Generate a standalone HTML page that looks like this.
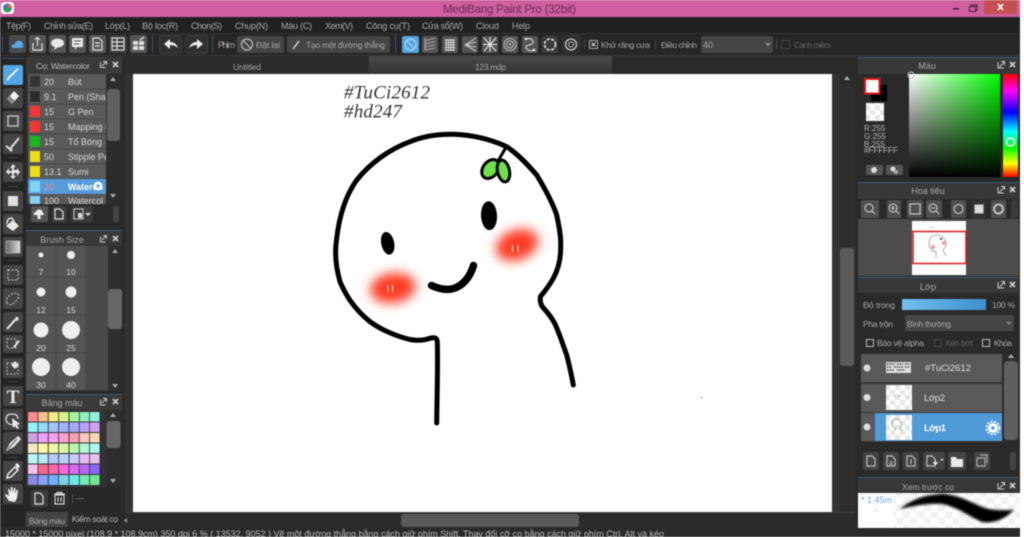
<!DOCTYPE html>
<html><head><meta charset="utf-8"><title>MediBang Paint Pro</title>
<style>
html,body{margin:0;padding:0;background:#fff;width:1024px;height:537px;overflow:hidden}
svg{display:block;filter:blur(.45px)}
text{font-family:"Liberation Sans","Noto Sans CJK JP",sans-serif;font-size:9px;fill:#a8a8a8}
.c{text-anchor:middle}
.l{fill:#d8d8d8}
.b{fill:#555}
.d{fill:#3c3c3c}
.i{fill:#ddd}
.s{fill:none;stroke:#ddd;stroke-width:1.2}
.k{fill:none;stroke:#000;stroke-linecap:round;stroke-linejoin:round}
</style></head><body>
<svg width="1024" height="537" viewBox="0 0 1024 537" xmlns="http://www.w3.org/2000/svg">
<defs>
<pattern id="ch" width="10" height="10" patternUnits="userSpaceOnUse"><rect width="10" height="10" fill="#fff"/><rect width="5" height="5" fill="#e6e6e6"/><rect x="5" y="5" width="5" height="5" fill="#e6e6e6"/></pattern>
<pattern id="ch2" width="14" height="14" patternUnits="userSpaceOnUse"><rect width="14" height="14" fill="#fff"/><rect width="7" height="7" fill="#f2f2f2"/><rect x="7" y="7" width="7" height="7" fill="#f2f2f2"/></pattern>
<linearGradient id="sv1"><stop offset="0" stop-color="#fff"/><stop offset="1" stop-color="#00ff00"/></linearGradient>
<linearGradient id="sv2" x2="0" y2="1"><stop offset="0" stop-color="#000" stop-opacity="0"/><stop offset="1" stop-color="#000"/></linearGradient>
<linearGradient id="hue" x2="0" y2="1"><stop offset="0" stop-color="#f00"/><stop offset=".167" stop-color="#f0f"/><stop offset=".37" stop-color="#00f"/><stop offset=".56" stop-color="#0ff"/><stop offset=".72" stop-color="#0f0"/><stop offset=".87" stop-color="#ff0"/><stop offset="1" stop-color="#f00"/></linearGradient>
<linearGradient id="op"><stop offset="0" stop-color="#72bef0"/><stop offset="1" stop-color="#3f8fcb"/></linearGradient>
<linearGradient id="gr"><stop offset="0" stop-color="#666"/><stop offset="1" stop-color="#ddd"/></linearGradient>
<linearGradient id="tab" x2="0" y2="1"><stop offset="0" stop-color="#4a4a4a"/><stop offset="1" stop-color="#333"/></linearGradient>
<filter id="bl" x="-60%" y="-60%" width="220%" height="220%"><feGaussianBlur stdDeviation="5.5"/></filter>
<filter id="bs" x="-10%" y="-50%" width="120%" height="200%"><feGaussianBlur stdDeviation="1.2"/></filter>
</defs>

<!-- base -->
<rect width="1024" height="537" fill="#2a2a2a"/>
<rect x="1020" width="4" height="537" fill="#fff"/>

<!-- title bar -->
<rect width="1020" height="17" fill="#cf5f9e"/>
<rect x="1" y="2" width="13" height="12" rx="3" fill="#fff"/>
<circle cx="7.5" cy="8" r="4.5" fill="#2c9b6a"/><path d="M7.5 3.5a4.5 4.5 0 0 1 4.5 4.5H7.5z" fill="#e8663c"/><path d="M3 8a4.5 4.5 0 0 1 4.5-4.5V8z" fill="#3a78c8"/>
<text x="443" y="13" textLength="133" style="font-size:11.5px;fill:#6a2a58">MediBang Paint Pro (32bit)</text>
<rect x="953" y="8" width="6" height="1.6" fill="#40233a"/>
<rect x="971" y="5" width="6" height="5" fill="none" stroke="#40233a"/><rect x="969.500" y="6.500" width="6" height="5" fill="#cf5f9e" stroke="#40233a"/>
<rect x="984" y="0" width="33" height="14" fill="#c4504f"/>
<path d="M998 4l5 6M1003 4l-5 6" stroke="#fff" stroke-width="1.6"/>

<!-- menu -->
<rect y="17" width="1020" height="16" fill="#212121"/>
<text x="6" y="29" textLength="25">Tệp(F)</text>
<text x="44" y="29" textLength="49">Chỉnh sửa(E)</text>
<text x="105" y="29" textLength="25">Lớp(L)</text>
<text x="142" y="29" textLength="36">Bộ lọc(R)</text>
<text x="191" y="29" textLength="31">Chọn(S)</text>
<text x="235" y="29" textLength="33">Chụp(N)</text>
<text x="281" y="29" textLength="31">Màu (C)</text>
<text x="325" y="29" textLength="28">Xem(V)</text>
<text x="366" y="29" textLength="44">Công cụ(T)</text>
<text x="422" y="29" textLength="41">Cửa sổ(W)</text>
<text x="476" y="29" textLength="23">Cloud</text>
<text x="512" y="29" textLength="18">Help</text>

<!-- toolbar -->
<rect y="33" width="1020" height="22" fill="#262626"/>
<rect y="33" width="1020" height="1" fill="#333"/>
<rect x="2" y="36" width="1" height="16" fill="#3b5068"/>
<rect x="152" y="35" width="1" height="18" fill="#3b5068"/>
<rect x="212" y="35" width="1" height="18" fill="#3b5068"/>
<rect x="395" y="35" width="1" height="18" fill="#3b5068"/>
<rect x="9" y="35" width="17" height="18" rx="2" fill="#4a4a4a"/>
<path d="M12 48q-1-4 3-4 1-4 5-3 3 0 3 4 1 3-2 3z" fill="#5ca8e6"/>
<rect x="29" y="35" width="17" height="18" rx="2" class="b"/>
<path d="M33 43v7h9v-7M37.500 46v-8M35 40l2.500-2.500 2.500 2.500" class="s"/>
<rect x="49" y="35" width="17" height="18" rx="2" class="b"/>
<ellipse cx="57.500" cy="43" rx="6.500" ry="4.500" fill="#e8e8e8"/><path d="M55 46l-1 4 4-3z" fill="#e8e8e8"/>
<rect x="69" y="35" width="17" height="18" rx="2" class="b"/>
<path d="M72 38h11v9h-6l-2 3v-3h-3z" fill="#e8e8e8"/><path d="M74 41h7M74 44h5" stroke="#555"/>
<rect x="89" y="35" width="17" height="18" rx="2" class="b"/>
<path d="M93 38h6l3 3v9h-9zM95 43h5M95 46h5" class="s"/>
<rect x="109" y="35" width="18" height="18" rx="2" class="d"/>
<path d="M112 38h12v12h-12zM112 42h12M112 46h12M117 38v12" class="s"/>
<rect x="130" y="35" width="17" height="18" rx="2" class="b"/>
<path d="M133 41h5v4h-5zM139 41h5v4h-5zM133 46h5v4h-5zM139 46h5v4h-5z" fill="#ddd"/><path d="M140 40l4-3" stroke="#ddd" stroke-width="1.500"/>
<rect x="159.500" y="35.500" width="22" height="18" rx="2" fill="#303030" stroke="#3e3e3e"/>
<path d="M164 44l6-5v3q6 0 8 6-3-3-8-3v4z" fill="#eee"/>
<rect x="185.500" y="35.500" width="22" height="18" rx="2" fill="#303030" stroke="#3e3e3e"/>
<path d="M203 44l-6-5v3q-6 0-8 6 3-3 8-3v4z" fill="#eee"/>
<text x="218" y="48" textLength="17">Phím</text>
<rect x="237" y="36" width="47" height="17" rx="2" style="fill:#454545"/>
<circle cx="247" cy="44.500" r="5.500" fill="none" stroke="#bbb" stroke-width="1.200"/><path d="M243 40.500l8 8" stroke="#bbb" stroke-width="1.200"/>
<text x="256" y="48" textLength="24" style="font-size:8.500px">Đặt lại</text>
<rect x="287" y="36" width="103" height="17" rx="2" style="fill:#454545"/>
<path d="M293 49l6-8" stroke="#ccc" stroke-width="1.500"/>
<text x="306" y="48" textLength="79" style="font-size:8.500px">Tạo một đường thẳng</text>

<!-- snap icons -->
<rect x="402" y="36" width="17" height="17" rx="2" fill="#55a5e2"/>
<circle cx="410.500" cy="44.500" r="5.500" fill="none" stroke="#a8d4f4" stroke-width="1.200"/><path d="M406.500 40.500l8 8" stroke="#a8d4f4" stroke-width="1.200"/>
<rect x="422" y="36" width="16" height="17" rx="2" class="b"/>
<path d="M425 41l10-3M425 44l10-2.500M425 47l10-2M425 50l10-2M425 38v12" stroke="#aaa"/>
<rect x="442" y="36" width="16" height="17" rx="2" class="b"/>
<path d="M445 40h10M445 42.500h10M445 45h10M445 47.500h10M445 50h10M446 39v12M448.500 39v12M451 39v12M453.500 39v12" stroke="#ddd" stroke-width=".9"/>
<rect x="462" y="36" width="16" height="17" rx="2" class="b"/>
<path d="M476 38l-11 7 11 6M476 42l-11 3 11 2" stroke="#ccc" fill="none"/>
<rect x="482" y="36" width="16" height="17" rx="2" class="b"/>
<path d="M484 38l12 13M496 38l-12 13M490 37v15M483 44.500h14" stroke="#eee"/>
<rect x="502" y="36" width="16" height="17" rx="2" class="b"/>
<circle cx="510" cy="44.500" r="6" fill="none" stroke="#bbb"/><circle cx="510" cy="44.500" r="3.500" fill="none" stroke="#bbb"/><circle cx="510" cy="44.500" r="1.200" fill="#bbb"/>
<rect x="522" y="36" width="16" height="17" rx="2" class="b"/>
<path d="M526 39q6-1 7 2t-4 4-2 4 7 1" fill="none" stroke="#ccc" stroke-width="1.200"/><circle cx="526" cy="39" r="1.300" fill="#eee"/><circle cx="534" cy="50" r="1.300" fill="#eee"/>
<rect x="542" y="36" width="16" height="17" rx="2" class="d"/>
<circle cx="550" cy="44.500" r="5.500" fill="none" stroke="#eee" stroke-width="1.500" stroke-dasharray="3 1.500"/>
<rect x="563" y="36" width="16" height="17" rx="2" fill="#2a2a2a" stroke="#3e3e3e"/>
<circle cx="571" cy="44.500" r="5.500" fill="none" stroke="#ccc" stroke-width="1.300"/><circle cx="571" cy="44.500" r="2.500" fill="none" stroke="#ccc"/>
<rect x="584" y="40" width="1" height="9" fill="#444"/>
<rect x="589.500" y="40.500" width="8" height="8" fill="none" stroke="#aaa"/><path d="M591.500 42.500l4 4M595.500 42.500l-4 4" stroke="#ddd"/>
<text x="601" y="48" textLength="49" style="font-size:8.500px">Khử răng cưa</text>
<rect x="655" y="40" width="1" height="9" fill="#444"/>
<text x="661" y="48" textLength="36" style="font-size:8.500px">Điều chỉnh</text>
<rect x="701" y="36" width="72" height="17" rx="2" fill="#454545"/>
<text x="703" y="48">40</text>
<path d="M765 43h6l-3 3z" fill="#999"/>
<rect x="776" y="40" width="1" height="9" fill="#555"/>
<rect x="781.500" y="40.500" width="8" height="8" fill="none" stroke="#444"/>
<text x="794" y="48" textLength="37" style="font-size:8.500px;fill:#666">Cạnh mềm</text>

<!-- tabs -->
<rect y="55" width="1020" height="19" fill="#2a2a2a"/>
<rect y="55" width="1020" height="1" fill="#383838"/>
<rect x="125" y="56" width="244" height="18" fill="#2c2c2c"/>
<text x="233" y="70" textLength="28" style="font-size:8.500px">Untitled</text>
<rect x="369" y="56" width="243" height="18" fill="url(#tab)"/>
<text x="475" y="70" textLength="31" style="font-size:8.500px">123.mdp</text>

<!-- canvas -->
<rect x="133" y="74" width="699" height="438" fill="#fff"/>
<rect x="125" y="74" width="8" height="438" fill="#333"/>
<text x="344" y="98.500" textLength="86" style="font-family:'Liberation Serif',serif;font-style:italic;font-size:19px;fill:#333">#TuCi2612</text>
<text x="344" y="117.500" textLength="58" style="font-family:'Liberation Serif',serif;font-style:italic;font-size:19px;fill:#333">#hd247</text>
<ellipse cx="393" cy="288" rx="23" ry="15" transform="rotate(-8 393 288)" fill="#ff3a20" filter="url(#bl)"/>
<ellipse cx="517" cy="245" rx="22" ry="15" transform="rotate(-20 517 245)" fill="#ff3a20" filter="url(#bl)"/>
<path d="M388 285v7M392.500 285v7M512.500 245v7M518 245v7" stroke="#ffdcd0" stroke-width="1.100"/>
<path class="k" stroke-width="5" d="M436.700 423C437 395 438 365 437.300 342 437 337 434 337.500 431 338 424 340.500 418 341 410 339.500 395 336 380 329 370 321.700 352 307 345 293 340 281.700 335 264 335 250 336.500 240 339 217 345 197 356 181 370 163 390 149 410 141.700 424 136 440 134 453.300 134.300 474 135 492 140 506.700 146.700 518 154 528 165 536.700 175 547 192 553 204 556.700 215 559 226 561 236 560.700 245 561 260 558 270 553.300 278.300 549 286 545 291 540.500 296.500 539.500 302 541 305 543 307.500 549 314 552 318 555 324 560 335 563 345 566.700 355 569 364 571.500 375 573.300 385"/>
<ellipse cx="387.700" cy="243.300" rx="6.500" ry="11.500" transform="rotate(-12 387.700 243.300)"/>
<ellipse cx="489" cy="215.700" rx="8" ry="14.500" transform="rotate(-3 489 215.700)"/>
<path class="k" stroke-width="7.500" d="M431.500 285.500Q448 293 459 286 469 280 473.500 265.500"/>
<path class="k" stroke-width="3" d="M506.500 146.500L498 161"/>
<ellipse cx="490.500" cy="169" rx="7.500" ry="10.500" transform="rotate(38 490.500 169)" fill="#6ee04a" stroke="#000" stroke-width="3"/>
<ellipse cx="503.500" cy="171" rx="6" ry="11" transform="rotate(-12 503.500 171)" fill="#6ee04a" stroke="#000" stroke-width="3"/>
<rect x="701" y="397" width="1" height="1" fill="#222"/>

<!-- canvas scrollbars -->
<rect x="832" y="74" width="23" height="438" fill="#333"/>
<rect x="840" y="74" width="14" height="438" fill="#2e2e2e"/>
<rect x="840" y="74" width="14" height="9" fill="#2a2a2a"/>
<path d="M844 80h6l-3-4z" fill="#aaa"/>
<rect x="840" y="248" width="14" height="118" rx="3" fill="#5a5a5a"/>
<rect x="125" y="512" width="730" height="15" fill="#2b2b2b"/>
<rect x="125" y="512" width="730" height="1" fill="#444"/>
<path d="M127 518v5l-3-2.500z" fill="#999"/>
<rect x="401" y="514" width="178" height="13" rx="3" fill="#5a5a5a"/>

<!-- status bar -->
<rect y="527" width="1020" height="10" fill="#2a2a2a"/>
<text x="5" y="537" textLength="659" style="font-size:9px;fill:#bbb">15000 * 15000 pixel   (108.9 * 108.9cm)   350 dpi   6 %   ( 13532, 9052 )   Vẽ một đường thẳng bằng cách giữ phím Shift. Thay đổi cỡ cọ bằng cách giữ phím Ctrl, Alt và kéo</text>

<!-- left tools -->
<rect y="56" width="25" height="471" fill="#242424"/>
<rect x="2" y="58" width="22" height="1" fill="#3b5068"/>
<rect x="3" y="65" width="20" height="20" rx="2" fill="#55a5e2"/>
<path d="M7 81q2-1 3-3l9-9-1.500-1-9 8.500q-2 2-1.500 4.500z" fill="#e8f4ff"/>
<rect x="3" y="88" width="20" height="20" rx="2" style="fill:#454545"/>
<path d="M7 99l7-8 5 5-7 8z" fill="#f0f0f0"/><path d="M7 99l3-3 5 5-3 3z" fill="#888"/>
<rect x="3" y="111" width="20" height="20" rx="2" style="fill:#454545"/>
<rect x="8" y="116" width="10" height="10" fill="none" stroke="#bbb" stroke-width="1.500"/>
<rect x="3" y="134" width="20" height="20" rx="2" style="fill:#454545"/>
<path d="M6 146l4 3 9-11" fill="none" stroke="#ddd" stroke-width="2"/><circle cx="11" cy="150" r="1.500" fill="#ddd"/>
<rect x="8" y="157" width="10" height="1" fill="#444"/>
<rect x="3" y="162" width="20" height="20" rx="2" style="fill:#454545"/>
<path d="M13 164l3 3h-2v3h3v-2l3 4-3 4v-3h-3v3h2l-3 3-3-3h2v-3H9v2l-3-3 3-4v3h3v-3h-2z" fill="#e4e4e4"/>
<rect x="8" y="186" width="10" height="1" fill="#444"/>
<rect x="3" y="191" width="20" height="20" rx="2" style="fill:#454545"/>
<rect x="8" y="196" width="10" height="10" fill="#e0e0e0"/>
<rect x="3" y="214" width="20" height="20" rx="2" style="fill:#454545"/>
<path d="M6 226l7-6 6 6-6 5z" fill="#e8e8e8"/><path d="M7 224q0-6 5-6l2 3" fill="none" stroke="#ddd" stroke-width="1.400"/>
<rect x="3" y="237" width="20" height="20" rx="2" style="fill:#454545"/>
<rect x="6" y="241" width="14" height="12" fill="url(#gr)" stroke="#ccc" stroke-width=".6"/>
<rect x="8" y="260" width="10" height="1" fill="#444"/>
<rect x="3" y="265" width="20" height="20" rx="2" style="fill:#454545"/>
<rect x="8" y="270" width="10" height="10" fill="none" stroke="#ccc" stroke-dasharray="2 1.500"/>
<rect x="3" y="288" width="20" height="21" rx="2" style="fill:#454545"/>
<path d="M7 303q-2-5 3-8t8-1q2 3-3 8t-8 1z" fill="none" stroke="#ccc" stroke-dasharray="2 1.500"/>
<rect x="3" y="312" width="20" height="20" rx="2" style="fill:#454545"/>
<path d="M7 329l8-9" stroke="#eee" stroke-width="2"/><path d="M16 316l1 1.500 2-.5-1 2 1 1.500-2-.2-1 1.500-.5-2-1.800-.6 1.800-1z" fill="#eee"/>
<rect x="3" y="335" width="20" height="18" rx="2" style="fill:#454545"/>
<rect x="7" y="339" width="9" height="9" fill="none" stroke="#bbb" stroke-dasharray="2 1.500"/><path d="M13 347l5-7 2 1-5 7z" fill="#ddd"/>
<rect x="3" y="358" width="20" height="20" rx="2" style="fill:#454545"/>
<rect x="7" y="363" width="11" height="11" fill="none" stroke="#bbb" stroke-dasharray="2 1.500"/><path d="M11 365l4-4 4 4-4 4z" fill="#e4e4e4"/>
<rect x="8" y="381" width="10" height="1" fill="#444"/>
<rect x="3" y="386" width="20" height="20" rx="2" style="fill:#454545"/>
<text x="13" y="403" class="c" style="font-family:'Liberation Serif',serif;font-weight:bold;font-size:19px;fill:#e8e8e8">T</text>
<rect x="3" y="409" width="20" height="21" rx="2" style="fill:#454545"/>
<path d="M13 425q-7-1-7-6t6-5 6 5" fill="none" stroke="#ddd" stroke-width="1.200"/><path d="M12 418l8 6-3 1 2 3-2 1-2-3-2 2z" fill="#e8e8e8"/>
<rect x="3" y="432" width="20" height="22" rx="2" style="fill:#454545"/>
<path d="M6 451l4-8 8-7 3 3-7 8z" fill="#e8e8e8"/><path d="M8 449l9-10" stroke="#555"/>
<rect x="8" y="457" width="10" height="1" fill="#444"/>
<rect x="3" y="461" width="20" height="20" rx="2" style="fill:#454545"/>
<path d="M7 478l1-4 7-7 3 3-7 7z" fill="none" stroke="#eee" stroke-width="1.500"/><path d="M15 465l2-2 3 3-2 3z" fill="#eee"/>
<rect x="3" y="484" width="20" height="20" rx="2" style="fill:#454545"/>
<path d="M9 501l-4-6 1-1 3 2-1-7h1.500l1 4 .5-6h1.500l.5 6 1-5h1.500l-.5 6 1.500-4h1.500l-1 8-2 4z" fill="#f0f0f0"/>

<!-- brush panel -->
<rect x="26" y="56" width="96" height="150" fill="#2e2e2e"/>
<rect x="26" y="57" width="96" height="17" fill="#3a3a3a"/>
<text x="36" y="69" textLength="54" style="font-size:8.500px;fill:#bbb">Cọ: Watercolor</text>
<path d="M100.500 62v5.500h5M102 66l4-4M103 61.500h3.500v3.500" fill="none" stroke="#ccc"/>
<path d="M113 62l5 5M118 62l-5 5" stroke="#ccc" stroke-width="1.800"/>
<rect x="28" y="74" width="78" height="130" fill="#5a5a5a"/>
<path d="M28 89h78M28 104h78M28 119h78M28 134h78M28 149h78M28 164h78M28 179h78M28 194h78" stroke="#484848"/>
<rect x="28" y="179" width="78" height="15" fill="#559cd8"/>
<rect x="30" y="76" width="10" height="11" fill="#333"/><rect x="30" y="91" width="10" height="11" fill="#2c2c2c"/>
<rect x="30" y="106" width="10" height="11" fill="#f33"/><rect x="30" y="121" width="10" height="11" fill="#f33"/>
<rect x="30" y="136" width="10" height="11" fill="#19b81e"/><rect x="30" y="151" width="10" height="11" fill="#f0dc14"/>
<rect x="30" y="166" width="10" height="11" fill="#f0dc14"/><rect x="30" y="181" width="10" height="11" fill="#7fd4f8"/>
<rect x="30" y="196" width="10" height="8" fill="#7fd4f8"/>
<g>
<text x="44" y="85" class="l">20</text><text x="68" y="85" class="l">Bút</text>
<text x="44" y="100" class="l">9.1</text><text x="68" y="100" class="l">Pen (Sha</text>
<text x="44" y="115" class="l">15</text><text x="68" y="115" class="l">G Pen</text>
<text x="44" y="130" class="l">15</text><text x="68" y="130" class="l">Mapping I</text>
<text x="44" y="145" class="l">15</text><text x="68" y="145" class="l">Tổ Bóng</text>
<text x="44" y="160" class="l">50</text><text x="68" y="160" class="l">Stipple Pe</text>
<text x="44" y="175" class="l">13.1</text><text x="68" y="175" class="l">Sumi</text>
<text x="44" y="190" style="fill:#ff8a9a">20</text><text x="68" y="190" style="fill:#fff;font-weight:bold">Waterco</text>
<text x="44" y="204" class="l">100</text><text x="68" y="204" class="l">Watercol</text>
</g>
<circle cx="98" cy="186" r="4.500" fill="#fff" opacity=".9"/><circle cx="98" cy="186" r="1.500" fill="#559cd8"/>
<rect x="106" y="74" width="16" height="132" fill="#2c2c2c"/>
<path d="M110 81h6l-3-4zM110 194h6l-3 4z" fill="#aaa"/>
<rect x="107" y="89" width="13" height="52" rx="3" fill="#5f5f5f"/>
<rect x="26" y="204" width="96" height="22" fill="#2a2a2a"/>
<rect x="31" y="206" width="17" height="16" rx="2" class="b"/>
<path d="M34 215q-1-3 2-3 1-3 3.500-2.500 3 0 3 3 2 .500 1 2.500h-3v4h-3v-4z" fill="#eee"/>
<rect x="52" y="206" width="15" height="16" rx="2" class="d"/>
<path d="M55 209h5l3 3v7h-8z" class="s"/>
<rect x="71" y="206" width="22" height="16" rx="2" class="d"/>
<rect x="74" y="209" width="9" height="10" fill="none" stroke="#ccc"/><rect x="78" y="213" width="4" height="5" fill="#ddd"/>
<path d="M85 213h6l-3 3z" fill="#ddd"/>
<rect x="113" y="206" width="6" height="16" rx="2" fill="#444"/>

<!-- brush size -->
<rect x="26" y="230" width="96" height="161" fill="#383838"/>
<rect x="26" y="230" width="96" height="1" fill="#3f5a72"/>
<text x="62" y="243" class="c" style="fill:#aaa">Brush Size</text>
<path d="M100.500 236.500v5.500h5M102 240l4-4M103 235.500h3.500v3.500" fill="none" stroke="#ccc"/>
<path d="M113 236l5 5M118 236l-5 5" stroke="#ccc" stroke-width="1.800"/>
<rect x="26" y="246" width="82" height="144" fill="#494949"/>
<rect x="26" y="246" width="59" height="144" fill="#555"/>
<path d="M56 246v144M26 277h60M26 315h60M26 353h60" stroke="#454545"/>
<g fill="#eee">
<circle cx="41" cy="255" r="2.500"/><circle cx="71" cy="255" r="4"/>
<circle cx="41" cy="292" r="4.500"/><circle cx="71" cy="292" r="5.500"/>
<circle cx="41" cy="330" r="7.500"/><circle cx="71" cy="330" r="9"/>
<circle cx="41" cy="367" r="9"/><circle cx="71" cy="367" r="9"/>
</g>
<g>
<text x="41" y="275" class="c l" style="font-size:8.500px">7</text><text x="71" y="275" class="c l" style="font-size:8.500px">10</text>
<text x="41" y="313" class="c l" style="font-size:8.500px">12</text><text x="71" y="313" class="c l" style="font-size:8.500px">15</text>
<text x="41" y="351" class="c l" style="font-size:8.500px">20</text><text x="71" y="351" class="c l" style="font-size:8.500px">25</text>
<text x="41" y="388" class="c l" style="font-size:8.500px">30</text><text x="71" y="388" class="c l" style="font-size:8.500px">40</text>
</g>
<rect x="108" y="246" width="14" height="145" fill="#2e2e2e"/>
<path d="M112 253h6l-3-4zM112 384h6l-3 4z" fill="#aaa"/>
<rect x="108" y="289" width="14" height="40" rx="3" fill="#666"/>

<!-- palette -->
<rect x="26" y="394" width="96" height="118" fill="#2e2e2e"/>
<rect x="26" y="394" width="96" height="1" fill="#3f5a72"/>
<rect x="26" y="395" width="96" height="15" fill="#3a3a3a"/>
<text x="62" y="406" class="c" style="fill:#aaa">Bảng màu</text>
<path d="M100.500 399.500v5.500h5M102 403l4-4M103 398.500h3.500v3.500" fill="none" stroke="#ccc"/>
<path d="M113 399l5 5M118 399l-5 5" stroke="#ccc" stroke-width="1.800"/>
<rect x="26" y="410" width="80" height="77" fill="#333"/>
<g>
<rect x="28" y="412" width="9.500" height="9.500" fill="#fa8a8f"/><rect x="38.300" y="412" width="9.500" height="9.500" fill="#f6c28a"/><rect x="48.700" y="412" width="9.500" height="9.500" fill="#f3ea8a"/><rect x="59" y="412" width="9.500" height="9.500" fill="#d8f38a"/><rect x="69.400" y="412" width="9.500" height="9.500" fill="#a3f3a0"/><rect x="79.700" y="412" width="9.500" height="9.500" fill="#8df0c0"/><rect x="90" y="412" width="9.500" height="9.500" fill="#8df0d8"/>
<rect x="28" y="422.500" width="9.500" height="9.500" fill="#8df4f8"/><rect x="38.300" y="422.500" width="9.500" height="9.500" fill="#94dcf8"/><rect x="48.700" y="422.500" width="9.500" height="9.500" fill="#a3c8f8"/><rect x="59" y="422.500" width="9.500" height="9.500" fill="#a0b4f8"/><rect x="69.400" y="422.500" width="9.500" height="9.500" fill="#a8a8f8"/><rect x="79.700" y="422.500" width="9.500" height="9.500" fill="#b8a0f8"/><rect x="90" y="422.500" width="9.500" height="9.500" fill="#d0a0f0"/>
<rect x="28" y="433" width="9.500" height="9.500" fill="#d0a0e8"/><rect x="38.300" y="433" width="9.500" height="9.500" fill="#f0a0f8"/><rect x="48.700" y="433" width="9.500" height="9.500" fill="#f8a0f0"/><rect x="59" y="433" width="9.500" height="9.500" fill="#f8a0d0"/><rect x="69.400" y="433" width="9.500" height="9.500" fill="#f8a0b0"/><rect x="79.700" y="433" width="9.500" height="9.500" fill="#f8c8c0"/><rect x="90" y="433" width="9.500" height="9.500" fill="#f8d8b0"/>
<rect x="28" y="443.500" width="9.500" height="9.500" fill="#f8e8c0"/><rect x="38.300" y="443.500" width="9.500" height="9.500" fill="#f8f8a8"/><rect x="48.700" y="443.500" width="9.500" height="9.500" fill="#f0f8a8"/><rect x="59" y="443.500" width="9.500" height="9.500" fill="#d8f8a8"/><rect x="69.400" y="443.500" width="9.500" height="9.500" fill="#b8f8a8"/><rect x="79.700" y="443.500" width="9.500" height="9.500" fill="#b0f8d8"/><rect x="90" y="443.500" width="9.500" height="9.500" fill="#a8f8f0"/>
<rect x="28" y="454" width="9.500" height="9.500" fill="#b8f8f8"/><rect x="38.300" y="454" width="9.500" height="9.500" fill="#b8e8f8"/><rect x="48.700" y="454" width="9.500" height="9.500" fill="#b8c8f8"/><rect x="59" y="454" width="9.500" height="9.500" fill="#b8d0f8"/><rect x="69.400" y="454" width="9.500" height="9.500" fill="#c8c8f8"/><rect x="79.700" y="454" width="9.500" height="9.500" fill="#e8b8f8"/><rect x="90" y="454" width="9.500" height="9.500" fill="#e8c0f0"/>
<rect x="28" y="464.500" width="9.500" height="9.500" fill="#f8c0f0"/><rect x="38.300" y="464.500" width="9.500" height="9.500" fill="#f86888"/><rect x="48.700" y="464.500" width="9.500" height="9.500" fill="#f868b0"/><rect x="59" y="464.500" width="9.500" height="9.500" fill="#f868d8"/><rect x="69.400" y="464.500" width="9.500" height="9.500" fill="#d868f0"/><rect x="79.700" y="464.500" width="9.500" height="9.500" fill="#b868f0"/><rect x="90" y="464.500" width="9.500" height="9.500" fill="#8868f8"/>
<rect x="28" y="475" width="9.500" height="10" fill="#8888e8"/><rect x="38.300" y="475" width="9.500" height="10" fill="#88a0f8"/><rect x="48.700" y="475" width="9.500" height="10" fill="#70b0f8"/><rect x="59" y="475" width="9.500" height="10" fill="#80d0e8"/><rect x="69.400" y="475" width="9.500" height="10" fill="#70e8e8"/><rect x="79.700" y="475" width="9.500" height="10" fill="#70e8b0"/><rect x="90" y="475" width="9.500" height="10" fill="#70e890"/>
</g>
<path d="M110 417h6l-3-4zM110 479h6l-3 4z" fill="#aaa"/>
<rect x="106.500" y="421" width="14" height="27" rx="3" fill="#666"/>
<rect x="26" y="487" width="95" height="25" fill="#272727"/>
<rect x="31" y="490" width="17" height="17" rx="2" class="d"/>
<path d="M35 493h5l3 3v8h-8z" class="s"/>
<rect x="52" y="490" width="15" height="17" rx="2" fill="#222" stroke="#3e3e3e"/>
<path d="M54 494h11M55 495h9v9h-9zM58 497v5M61 497v5M57 494v-1.500h5v1.500" class="s"/>
<rect x="72" y="494" width="1" height="9" fill="#555"/>
<text x="76" y="501" style="font-size:8px">---</text>
<rect x="26" y="512" width="42" height="15" fill="#444"/>
<text x="29" y="524" textLength="36" style="font-size:8.500px">Bảng màu</text>
<text x="72" y="522" textLength="46" style="font-size:8.500px;fill:#bbb">Kiểm soát cọ</text>

<!-- right: colour -->
<rect x="858" y="57" width="162" height="470" fill="#2a2a2a"/>
<rect x="858" y="57" width="161" height="1" fill="#3f5a72"/>
<rect x="858" y="58" width="161" height="16" fill="#383838"/>
<text x="927" y="69" class="c" style="fill:#aaa">Màu</text>
<path d="M998 62v6h6M999.500 67l5-5M1001 61.500h3.500v3.500" fill="none" stroke="#ccc"/>
<path d="M1010 62l5 5M1015 62l-5 5" stroke="#ccc" stroke-width="1.800"/>
<rect x="871" y="85" width="16" height="16" fill="#000"/>
<rect x="865" y="79" width="14.500" height="14.500" fill="#fff" stroke="#e01818" stroke-width="2"/>
<rect x="866" y="103" width="18" height="18" fill="url(#ch)"/>
<text x="864" y="131" style="font-size:8px;fill:#bbb">R:255</text><text x="864" y="139" style="font-size:8px;fill:#bbb">G:255</text><text x="864" y="147" style="font-size:8px;fill:#bbb">B:255</text><rect x="864" y="147" width="40" height="7" fill="#2a2a2a"/><text x="864" y="153" style="font-size:8px;fill:#bbb">#FFFFFF</text>
<rect x="866" y="165" width="17" height="10" rx="2" class="b"/><circle cx="874" cy="170" r="3" fill="#ddd"/>
<rect x="886" y="165" width="17" height="10" rx="2" class="b"/><circle cx="893" cy="169" r="2.500" fill="#ddd"/><circle cx="896" cy="172" r="2" fill="#aaa"/>
<rect x="909" y="74" width="91" height="103" fill="url(#sv1)"/>
<rect x="909" y="74" width="91" height="103" fill="url(#sv2)"/>
<circle cx="911" cy="75" r="3" fill="none" stroke="#ccc"/>
<rect x="1003" y="74" width="15" height="103" fill="url(#hue)"/>
<circle cx="1010.500" cy="142" r="4" fill="none" stroke="#fff" stroke-width="1.600"/>

<!-- navigator -->
<rect x="858" y="182" width="161" height="1" fill="#3f5a72"/>
<rect x="858" y="183" width="161" height="16" fill="#383838"/>
<text x="928" y="194" class="c" style="fill:#aaa">Hoa tiêu</text>
<path d="M998 187v6h6M999.500 192l5-5M1001 186.500h3.500v3.500" fill="none" stroke="#ccc"/>
<path d="M1010 187l5 5M1015 187l-5 5" stroke="#ccc" stroke-width="1.800"/>
<rect x="858" y="199" width="161" height="20" fill="#2a2a2a"/>
<g fill="#505050">
<rect x="861" y="200" width="18" height="18" rx="2"/><rect x="887" y="200" width="14" height="18" rx="2"/><rect x="907" y="200" width="16" height="18" rx="2"/><rect x="926" y="200" width="16" height="18" rx="2"/><rect x="951" y="200" width="15" height="18" rx="2"/><rect x="971" y="200" width="15" height="18" rx="2" fill="#333"/><rect x="991" y="200" width="15" height="18" rx="2"/><rect x="1011" y="200" width="7" height="18" rx="2" fill="#3a3a3a"/>
</g>
<g fill="none" stroke="#ccc" stroke-width="1.100">
<circle cx="869" cy="208" r="4"/><path d="M872 211l3 3"/>
<circle cx="893" cy="208" r="4"/><path d="M896 211l3 3M891 208h4M893 206v4"/>
<rect x="910" y="204" width="10" height="10"/>
<circle cx="933" cy="208" r="4"/><path d="M936 211l3 3M931 208h4"/>
<circle cx="958.500" cy="209" r="4.500"/>
<rect x="975" y="205" width="8" height="8" fill="#ddd"/>
<circle cx="998.500" cy="209" r="4.500" stroke-width="1.800"/>
</g>
<rect x="858" y="219" width="161" height="57" fill="#4c4c4c"/>
<rect x="912" y="221" width="54" height="54" fill="#fff"/>
<rect x="913" y="231.500" width="53" height="32" fill="#fff" stroke="#d81818" stroke-width="1.500"/>
<path d="M936 258v-7c-4 1-7-3-7-8s4-8 8-8 9 4 9 9c0 3-2 5-3 6l3 6" fill="none" stroke="#777" stroke-width=".6"/>
<circle cx="933" cy="247" r="2" fill="#f99"/><circle cx="944" cy="243" r="2" fill="#f99"/>
<circle cx="941" cy="239" r="1" fill="#333"/>
<rect x="929" y="227" width="5" height="1" fill="#ccc"/>

<!-- layer -->
<rect x="858" y="277" width="161" height="1" fill="#3f5a72"/>
<rect x="858" y="278" width="161" height="15" fill="#383838"/>
<text x="928" y="290" class="c" style="fill:#aaa">Lớp</text>
<path d="M998 282v6h6M999.500 287l5-5M1001 281.500h3.500v3.500" fill="none" stroke="#ccc"/>
<path d="M1010 282l5 5M1015 282l-5 5" stroke="#ccc" stroke-width="1.800"/>
<text x="863" y="308" textLength="32" style="font-size:8.500px">Độ trong</text>
<rect x="902" y="299" width="84" height="11" fill="url(#op)"/>
<text x="992" y="308" textLength="23" style="font-size:8.500px">100 %</text>
<text x="863" y="327" textLength="30" style="font-size:8.500px">Pha trộn</text>
<rect x="905" y="315" width="109" height="16" rx="2" fill="#454545"/>
<text x="907" y="327" textLength="44" style="font-size:8.500px">Bình thường</text>
<path d="M1006 322h6l-3 3z" fill="#888"/>
<rect x="866.500" y="339.500" width="7" height="7" fill="none" stroke="#bbb"/>
<text x="877" y="346" textLength="47" style="font-size:8.500px">Bảo vệ alpha</text>
<rect x="934.500" y="339.500" width="7" height="7" fill="none" stroke="#444"/>
<text x="945" y="346" textLength="28" style="font-size:8.500px;fill:#666">Xén bớt</text>
<rect x="982.500" y="339.500" width="7" height="7" fill="none" stroke="#bbb"/>
<text x="994" y="346" textLength="18" style="font-size:8.500px">Khóa</text>

<rect x="861" y="354" width="141" height="88" fill="#353535"/>
<rect x="861" y="354" width="141" height="28" fill="#595959"/>
<rect x="861" y="384" width="141" height="28" fill="#595959"/>
<rect x="861" y="413" width="141" height="28" fill="#595959"/>
<rect x="875" y="413" width="127" height="28" fill="#4f9bd8"/>
<circle cx="867" cy="368" r="3.500" fill="#ddd"/><circle cx="867" cy="397.500" r="3.500" fill="#ddd"/><circle cx="867" cy="427" r="3.500" fill="#ddd"/>
<rect x="886" y="362" width="25" height="11" fill="#ddd"/>
<path d="M887 364h8M897 364h6M905 364h5M887 367h5M894 367h9M905 367h4M887 370h7M897 370h8" stroke="#333" stroke-width="1.300" stroke-dasharray="1.500 1"/>
<rect x="886" y="385" width="26" height="25" fill="url(#ch)"/>
<rect x="886" y="415" width="26" height="25" fill="url(#ch)"/>
<path d="M895 431v-3q-3-1-3-5t4-4 5 4-1 4l2 4" fill="none" stroke="#999" stroke-width=".8"/>
<circle cx="895" cy="396" r=".7" fill="#c66"/><circle cx="899" cy="396" r=".7" fill="#c66"/>
<text x="925" y="371" textLength="46" style="font-size:9.500px;fill:#ddd">#TuCi2612</text>
<text x="924" y="401" textLength="21" style="font-size:9.500px;fill:#ddd">Lớp2</text>
<text x="924" y="431" textLength="22" style="font-size:9.500px;fill:#fff;font-weight:bold">Lớp1</text>
<circle cx="993" cy="428" r="5" fill="#fff"/><circle cx="993" cy="428" r="6.500" fill="none" stroke="#fff" stroke-width="1.800" stroke-dasharray="2 1.500"/><circle cx="993" cy="428" r="1.800" fill="#4f9bd8"/>
<rect x="1002" y="354" width="17" height="94" fill="#2c2c2c"/>
<path d="M1008 358h6l-3-4zM1008 442h6l-3 4z" fill="#aaa"/>
<rect x="1004" y="361" width="14" height="79" rx="4" fill="#5f5f5f"/>
<rect x="858" y="442" width="161" height="36" fill="#2a2a2a"/>
<g fill="#444"><rect x="863" y="452" width="16" height="18" rx="2"/><rect x="883" y="452" width="16" height="18" rx="2"/><rect x="903" y="452" width="16" height="18" rx="2"/><rect x="923" y="452" width="22" height="18" rx="2"/><rect x="948" y="452" width="18" height="18" rx="2"/><rect x="974" y="452" width="16" height="18" rx="2"/><rect x="1010" y="452" width="6" height="18" rx="2"/></g>
<path d="M867 456h5l3 3v7h-8zM887 456h5l3 3v7h-8zM907 456h5l3 3v7h-8z" class="s" style="stroke:#bbb"/>
<text x="891" y="465" class="c" style="font-size:7px;fill:#ccc">a</text>
<path d="M911 459v5" stroke="#ccc"/>
<path d="M927 456h5l3 3v7h-8z" class="s" style="stroke:#bbb"/>
<path d="M933 463h5M935.500 460.500v5" stroke="#eee" stroke-width="1.200"/><path d="M940 459h4l-2 2z" fill="#ddd"/>
<path d="M951 457h5l1 2h6v8h-12z" fill="#e8e8e8"/>
<rect x="970" y="456" width="1" height="9" fill="#444"/>
<path d="M977 458h8v8h-8zM980 455h7v8" class="s" style="stroke:#aaa"/>

<!-- brush preview -->
<rect x="858" y="477" width="161" height="1" fill="#3f5a72"/>
<rect x="858" y="478" width="161" height="15" fill="#383838"/>
<text x="928" y="490" class="c" style="font-size:8.500px;fill:#aaa">Xem trước cọ</text>
<path d="M998 483v6h6M999.500 488l5-5M1001 482.500h3.500v3.500" fill="none" stroke="#ccc"/>
<path d="M1010 483l5 5M1015 483l-5 5" stroke="#ccc" stroke-width="1.800"/>
<rect x="858" y="493" width="161" height="35" fill="url(#ch2)"/>
<text x="861" y="503" style="font-size:9px;fill:#6aa8d8">* 1.45mm</text>
<rect x="893" y="493" width="127" height="35" fill="url(#ch2)"/>
<rect x="858" y="493" width="35" height="35" fill="#fff"/>
<text x="861" y="503" style="font-size:9px;fill:#6aa8d8">* 1.45m</text>
<rect x="875" y="510" width="1" height="1" fill="#666"/>
<path d="M900 509C912 499 926 494 945 494 962 496 974 504 985 508 996 511 1005 510 1014 510 1006 518 995 524 982 522 968 516 958 507 942 504 928 503 914 506 900 509z" fill="#000" filter="url(#bs)"/>
</svg>
</body></html>
